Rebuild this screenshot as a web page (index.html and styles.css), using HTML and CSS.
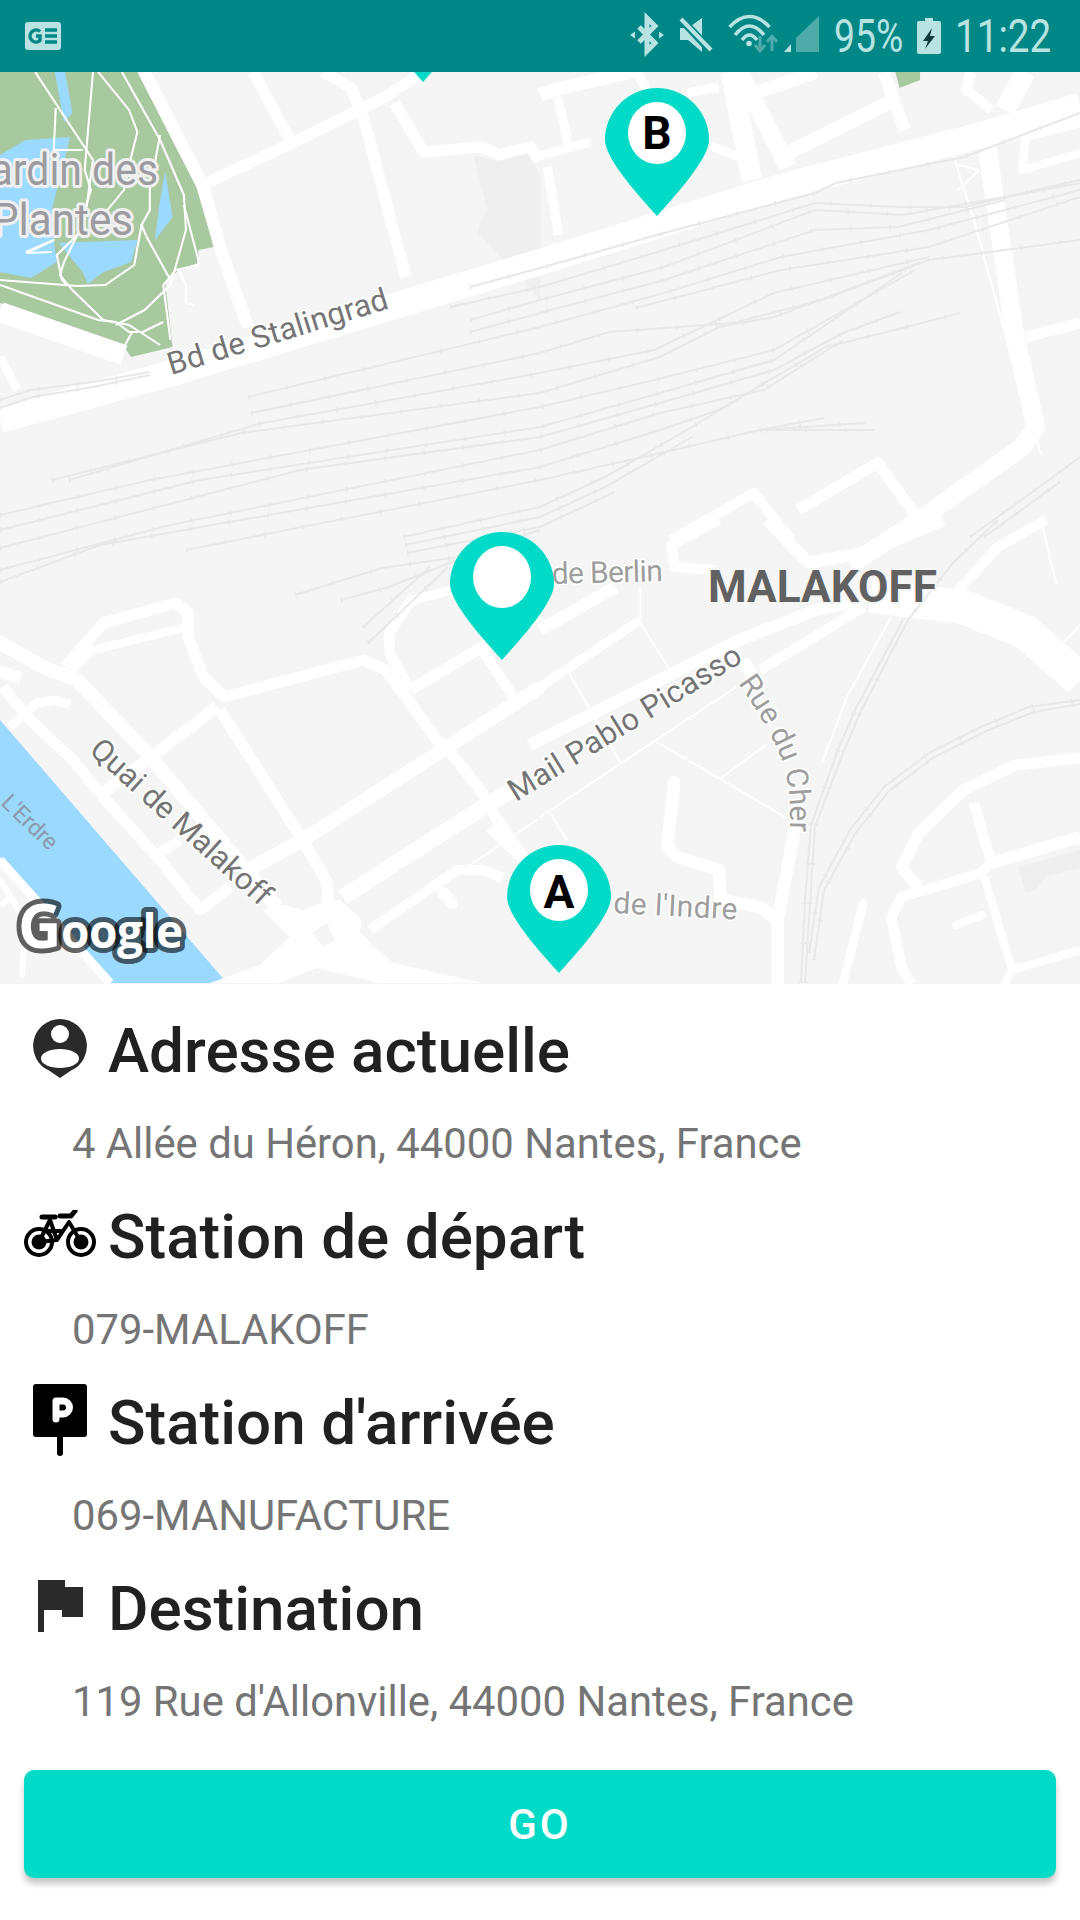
FILE: index.html
```html
<!DOCTYPE html>
<html lang="fr">
<head>
<meta charset="utf-8">
<title>Itinéraire</title>
<link rel="stylesheet" href="styles.css">
</head>
<body>
<div class="screen">
  <header class="status">
    <svg class="status-app" viewBox="0 0 36 28" width="36" height="28">
      <rect width="36" height="28" rx="3" fill="#b8e3e2"/>
      <path d="M15 9.500A6 6 0 1 0 15 18.500V14H11" class="st-g"/>
      <path d="M20 8H32M20 14H32M20 20H32" class="st-g"/>
    </svg>
    <div class="status-right">
      <svg class="status-icons" viewBox="630 0 190 72" width="190" height="72">
        <path class="st-line bold" d="M639 27L655 43L647 51V18L655 26L639 42"/>
        <path class="st-fill" d="M630 35l5-3.500v7zM664 35l-5-3.500v7z"/>
        <path class="st-fill" d="M680 28h8l14-10v34l-14-12h-8z"/>
        <path class="st-cut" d="M679 17L711 51"/>
        <path class="st-line" d="M681 19L711 50"/>
        <circle class="st-fill" cx="749" cy="43.500" r="2.800"/>
        <path class="st-line thin" d="M729.500 27Q749.500 6 769.500 27M735 35Q749.500 17 764 35M742 40Q749.500 30 757 40"/>
        <path class="st-dim-line" d="M760 36V50M755 45L760 51L765 45M772 51V37M767 42L772 36L777 42"/>
        <path class="st-fill" d="M784 52L791 44V52Z"/>
        <path class="st-dim" d="M796 52V38L819 16V52Z"/>
      </svg>
      <span class="st-text pct">95%</span>
      <svg class="status-batt" viewBox="0 0 24 36" width="24" height="36">
        <path class="st-fill" d="M8 0H16V3H22Q24 3 24 5V34Q24 36 22 36H2Q0 36 0 34V5Q0 3 2 3H8Z"/>
        <path class="st-bolt" d="M15 10L6 23H11L8 31L18 18H13Z"/>
      </svg>
      <span class="st-text time">11:22</span>
    </div>
  </header>

  <svg class="map" viewBox="0 72 1080 912" width="1080" height="912">
    <defs>
      <path id="pin" d="M0 0C-14 -16 -52 -56 -52 -76A52 52 0 1 1 52 -76C52 -56 14 -16 0 0Z"/>
      <g id="rails">
        <path d="M470 287L540 268L664 233L815 193L836 183L964 157L1080 113"/>
        <path d="M450 307L540 287L664 250L815 203L898 207L964 207L1080 180"/>
        <path d="M470 320L540 300L664 267L815 210L902 215L1005 197L1080 183"/>
        <path d="M470 332L540 313L664 280L815 230L898 227L1005 200"/>
        <path d="M248 397L540 327L664 293L781 257L929 230L1080 190"/>
        <path d="M636 308L781 270L929 247L1080 197"/>
        <path d="M251 413L540 353L609 332L733 323L822 300L929 260L1080 240"/>
        <path d="M69 480L262 423L540 373L654 350L774 293L929 257"/>
        <path d="M52 480L241 433L540 393L660 357L719 327L774 317L919 263"/>
        <path d="M0 515L150 480L540 407L654 380L774 350L915 270"/>
        <path d="M0 530L200 480L540 427L660 393L774 360L902 273"/>
        <path d="M0 548L300 470L540 437L660 403L774 370L843 333L900 312"/>
        <path d="M0 570L170 525L540 450L660 413L764 390L843 340"/>
        <path d="M0 582L100 545L540 467L660 430L719 410L826 347L895 330L960 313"/>
        <path d="M186 550L540 480L643 457L760 430L874 430"/>
        <path d="M403 537L540 507L605 477L692 427L774 377"/>
        <path d="M405 545L540 517L605 487L692 437"/>
        <path d="M407 553L540 527L615 492"/>
        <path d="M760 430L824 418M760 430L865 423"/>
        <path d="M295 595L382 568L458 557L540 530M341 600L389 587L482 550M363 627L430 567M368 643L448 567"/>
        <path d="M0 408L33 397L93 387L150 375M0 400L30 390L93 382L150 372"/>
        <path d="M970 537L1046 482L1080 457M984 537L1060 482"/>
        <path d="M805 983L809 920L815 827L843 753L860 713L908 620L953 563L998 520"/>
        <path d="M801 983L805 900L811 825L838 750L855 710L903 620"/>
        <path d="M809 953L819 887L850 830L884 787L929 753L981 727L1029 707L1080 700"/>
        <path d="M814 960L824 890L855 834L889 791L934 757L986 731L1034 712L1080 704"/>
      </g>
    </defs>

    <rect class="land" x="0" y="72" width="1080" height="912"/>

    <!-- park and water -->
    <g transform="scale(1.033 1)">
      <polygon class="park" points="0,303 120,347 127,357 167,347 160,283 173,270 192,263 192,250 207,247 190,187 133,72 0,72"/>
      <polygon class="water" points="53,72 63,72 70,113 62,122"/>
      <polygon class="water" points="0,155 25,140 68,137 60,170 50,210 52,240 55,262 30,278 0,272"/>
      <polygon class="water" points="57,243 133,240 127,262 100,272 85,284 80,272"/>
      <polygon class="water" points="160,172 167,217 150,240 155,200"/>
      <polyline class="road w2" points="34,72 90,160 82,220 62,262 58,275 70,290 100,320 125,325 155,345"/>
      <polyline class="road w2" points="90,72 82,170 88,190 75,235 55,255 60,280 65,285"/>
      <polyline class="road w2" points="95,72 125,110 133,132 125,165 120,190 100,215"/>
      <polyline class="road w2" points="118,72 155,140 178,195 180,230 165,285 140,310 112,325"/>
      <polyline class="road w2" points="54,108 52,150 80,150M42,122 53,128"/>
      <polyline class="road w2" points="155,135 145,190 145,210 137,225 142,237 165,280"/>
      <polyline class="road w2" points="178,205 192,260 192,265 170,270 158,285 165,340"/>
      <polyline class="road w2" points="0,280 75,286 102,285 130,265 137,225"/>
      <polyline class="road w2" points="0,285 95,320 112,322 125,332 138,332 158,322"/>
      <polyline class="road w2" points="128,332 120,347"/>
      <polyline class="road w2" points="173,270 180,285 180,303 188,305"/>
      <polyline class="road w2" points="25,252 52,240 26,253 50,252"/>
    </g>
    <polygon class="water" points="0,720 227,983 110,983 0,857"/>

    <!-- building footprints -->
    <g transform="scale(1.033 1)">
      <polygon class="building" points="458,155 480,160 510,152 523,175 523,300 480,252 462,232 468,216 472,210"/>
    </g>
    <g transform="translate(540 0) scale(1.033 1) translate(-540 0)">
      <polygon class="building" points="1003,867 1063,850 1063,868 1030,876 1020,890 1010,893"/>
      <polygon class="park" points="884,72 908,72 908,80 888,88"/>
    </g>

    <!-- roads, left half -->
    <g transform="scale(1.033 1)">
      <polyline class="road w26" points="0,420 170,372 523,262"/>
      <polyline class="road w20" points="0,312 120,355"/>
      <polyline class="road w8" points="0,357 17,390"/>
      <polyline class="road w12" points="140,72 197,187 213,247 240,327"/>
      <polyline class="road w11" points="200,183 283,143 373,97 410,72"/>
      <polyline class="road w11" points="245,72 282,142"/>
      <polyline class="road w11" points="313,72 340,88 353,122 393,277"/>
      <polyline class="road w11" points="382,103 410,152 467,147 483,155 513,147 523,160"/>
      <polyline class="road w12" points="-5,670 20,678"/>
      <polyline class="road w11" points="63,667 100,623 170,603 182,613 182,637 197,677 217,697 352,660 373,670 393,697 423,740 433,748 467,793 480,817 510,863"/>
      <polyline class="road w8" points="70,670 90,650 177,628"/>
      <polyline class="road w10" points="400,597 377,633 377,653 397,690"/>
      <polyline class="road w9" points="400,600 450,587"/>
      <polyline class="road w11" points="397,690 467,647 523,615"/>
      <polyline class="road w10" points="467,650 497,697"/>
      <polyline class="road w14" points="523,687 433,747 293,840 240,870"/>
      <polyline class="road w11" points="213,710 293,840 317,883 317,907"/>
    </g>

    <!-- roads, right half -->
    <g transform="translate(540 0) scale(1.033 1) translate(-540 0)">
      <polyline class="road w26" points="540,262 773,187 967,135 1063,106"/>
      <polyline class="road w13" points="540,95 560,88 630,72"/>
      <polyline class="road w9" points="547,167 558,235"/>
      <polyline class="road w9 cap" points="535,157 585,143"/>
      <polyline class="road w9" points="557,97 568,147"/>
      <polyline class="road w9" points="634,72 643,90"/>
      <polyline class="road w9" points="683,93 713,87"/>
      <polyline class="road w9" points="705,146 733,157"/>
      <polyline class="road w20" points="725,72 745,180"/>
      <polyline class="road w17" points="733,72 780,167"/>
      <polyline class="road w13" points="743,95 807,72"/>
      <polyline class="road w14" points="780,153 883,100"/>
      <polyline class="road w12" points="873,72 893,130"/>
      <polyline class="road w10" points="957,72 953,90 977,110"/>
      <polyline class="road w20" points="1010,72 990,110"/>
      <polyline class="road w18" points="973,143 977,177 1000,337 1020,427 1007,447 907,520 840,565"/>
      <polyline class="road w8" points="1063,123 1010,137 1007,170 1063,153"/>
      <polyline class="road w11" points="1010,337 1063,323"/>
      <polyline class="road w2" points="940,155 960,220 1000,370 1015,420 1025,455"/>
      <polyline class="road w2" points="945,165 965,170 945,190"/>
      <polyline class="road w10" points="667,540 747,493 773,527 783,540"/>
      <polyline class="road w11" points="790,510 867,463 907,520"/>
      <polyline class="road w12" points="760,520 800,563 857,552 930,520"/>
      <polyline class="road w10" points="713,520 667,545 670,567 710,570"/>
      <polyline class="road w12" points="540,630 613,587"/>
      <polyline class="road w9" points="540,687 637,620"/>
      <polyline class="road w2" points="637,620 637,587"/>
      <polyline class="road w34" points="860,596 950,607 1010,632 1063,680"/>
      <polyline class="road w10" points="1030,520 983,547 943,593"/>
      <polyline class="road w12" points="530,745 733,640 807,610 853,600"/>
      <polyline class="road w10" points="753,670 853,607"/>
      <polyline class="road w12" points="737,660 747,677"/>
      <polyline class="road w2" points="540,817 730,687"/>
      <polyline class="road w2" points="650,740 777,817"/>
      <polyline class="road w2" points="715,778 763,742"/>
      <polyline class="road w2" points="568,673 618,763"/>
      <polyline class="road w2" points="637,623 670,677"/>
      <polyline class="road w2" points="550,813 570,847"/>
      <polyline class="road w2" points="813,763 837,697 880,617"/>
      <polyline class="road w2" points="1025,520 1040,585"/>
      <polyline class="road w2" points="1040,650 1063,625"/>
      <polyline class="road w12 cap" points="670,782 663,847 673,857 713,870 715,900 753,907 770,920 770,984"/>
      <polyline class="road w12" points="787,827 770,920"/>
      <polyline class="road w11" points="1063,758 1000,765 950,790 907,833 890,867 903,883 907,893"/>
      <polyline class="road w10" points="960,803 977,863 967,873 890,897 880,917 890,967 900,984"/>
      <polyline class="road w12" points="977,863 1063,837"/>
      <polyline class="road w8" points="970,877 997,970 990,984"/>
      <polyline class="road w8" points="997,970 1063,950"/>
      <polyline class="road w8 cap" points="853,903 833,984"/>
      <polyline class="road w8 cap" points="943,925 968,915"/>
    </g>

    <!-- roads at true scale: the quai and the roundabout -->
    <polyline class="road w14" points="-5,640 43,667 77,680 147,753 277,907"/>
    <polyline class="road w11" points="3,687 30,720 73,760 103,797 160,860 200,910 230,887"/>
    <polyline class="road w9" points="10,727 37,703 55,700 70,705"/>
    <polyline class="road w12" points="103,793 143,763 217,707"/>
    <polyline class="road w10" points="160,853 180,840"/>
    <polyline class="road w6 cap" points="0,880 25,920 22,975"/>
    <polyline class="road w6" points="0,905 13,897"/>
    <polyline class="road w9" points="0,860 110,983"/>
    <polygon class="paved" points="263,910 283,905 303,910 320,903 340,900 362,920 360,932 372,945 393,963 483,983 210,983 260,965 290,937"/>
    <polyline class="road w16" points="343,897 463,820 520,785"/>
    <polyline class="road w10" points="370,930 457,870 483,870 503,878"/>
    <polyline class="road w12 cap" points="443,893 452,903"/>
    <polyline class="road w2" points="467,867 537,820"/>
    <polyline class="road w11" points="490,827 527,863"/>
    <polygon class="land" points="312,933 327,923 335,940 323,947"/>
    <polygon class="land" points="275,984 317,968 383,984"/>

    <g class="rail-lines"><use href="#rails"/></g>
    <g class="rail-ties"><use href="#rails"/></g>

    <!-- labels -->
    <text class="lbl-park" x="-32" y="185" textLength="190" lengthAdjust="spacingAndGlyphs">Jardin des</text>
    <text class="lbl-park" x="-8" y="235" textLength="141" lengthAdjust="spacingAndGlyphs">Plantes</text>
    <text class="lbl-road" transform="translate(171 375) rotate(-17)" textLength="229">Bd de Stalingrad</text>
    <text class="lbl-road" transform="translate(88 752) rotate(42)" textLength="232">Quai de Malakoff</text>
    <text class="lbl-water" transform="translate(0 804) rotate(44)" textLength="68">L'Erdre</text>
    <text class="lbl-road" transform="translate(516 802) rotate(-31.700)" textLength="268">Mail Pablo Picasso</text>
    <path id="cher" class="nopaint" d="M738 683C760 715 772 735 782 760C790 785 791 805 789 850"/>
    <text class="lbl-minor"><textPath href="#cher">Rue du Cher</textPath></text>
    <text class="lbl-minor" transform="translate(552 584) rotate(-1.500)" textLength="111">de Berlin</text>
    <text class="lbl-minor" transform="translate(613 913) rotate(3)" textLength="124">de l'Indre</text>
    <text class="lbl-city" x="708" y="602" textLength="229" lengthAdjust="spacingAndGlyphs">MALAKOFF</text>

    <!-- pins -->
    <use class="pin" href="#pin" x="423" y="82"/>
    <g transform="translate(657 216)">
      <use class="pin" href="#pin"/>
      <ellipse class="pin-hole" cx="0" cy="-83" rx="29" ry="31"/>
      <text class="pin-letter" x="0" y="-67">B</text>
    </g>
    <g transform="translate(502 660)">
      <use class="pin" href="#pin"/>
      <ellipse class="pin-hole" cx="0" cy="-83" rx="29" ry="31"/>
    </g>
    <g transform="translate(559 973)">
      <use class="pin" href="#pin"/>
      <ellipse class="pin-hole" cx="0" cy="-83" rx="29" ry="31"/>
      <text class="pin-letter" x="0" y="-65">A</text>
    </g>

    <text class="logo" x="18" y="948"><tspan class="logo-g">G</tspan>oogle</text>
  </svg>

  <main class="info">
    <section class="item">
      <h2 class="item-title">
        <span class="item-icon">
          <svg viewBox="0 0 54 59" width="54" height="59">
            <path class="ic-dark" d="M27 0A27 27 0 0 1 38 51.600L27 59L16 51.600A27 27 0 0 1 27 0Z"/>
            <circle class="ic-white" cx="27" cy="15" r="9"/>
            <ellipse class="ic-white" cx="27" cy="39.500" rx="19" ry="9.500"/>
          </svg>
        </span>
        Adresse actuelle
      </h2>
      <p class="item-sub">4 Allée du Héron, 44000 Nantes, France</p>
    </section>
    <section class="item">
      <h2 class="item-title">
        <span class="item-icon">
          <svg viewBox="0 0 72 48" width="72" height="48">
            <circle class="ic-ring" cx="15" cy="32" r="13"/>
            <circle class="ic-ring" cx="57" cy="32" r="13"/>
            <circle class="ic-black" cx="15" cy="32" r="7.500"/>
            <circle class="ic-black" cx="57" cy="32" r="7.500"/>
            <path class="ic-frame" d="M15 32L26 10L33 30L45 12L57 32M33 30L15 32M22 21H38"/>
            <path class="ic-cap" d="M18 7H31M36 6H47L51 1"/>
          </svg>
        </span>
        Station de départ
      </h2>
      <p class="item-sub">079-MALAKOFF</p>
    </section>
    <section class="item">
      <h2 class="item-title">
        <span class="item-icon">
          <svg viewBox="0 0 54 72" width="54" height="72">
            <rect class="ic-black" width="54" height="53" rx="3"/>
            <path class="ic-cap pole" d="M27 52V69"/>
            <path class="ic-p" d="M23 17V35M23 17H30A6.500 6.500 0 0 1 30 30H23"/>
          </svg>
        </span>
        Station d'arrivée
      </h2>
      <p class="item-sub">069-MANUFACTURE</p>
    </section>
    <section class="item">
      <h2 class="item-title">
        <span class="item-icon">
          <svg viewBox="0 0 45 52" width="45" height="52">
            <path class="ic-dark" d="M0 0H27V7H45V37H24V30H6V52H0Z"/>
          </svg>
        </span>
        Destination
      </h2>
      <p class="item-sub">119 Rue d'Allonville, 44000 Nantes, France</p>
    </section>
    <button class="go" type="button">GO</button>
  </main>
</div>
</body>
</html>
```
FILE: styles.css
```css
* { box-sizing: border-box; }
html, body { margin: 0; padding: 0; background: #fff; }
body { font-family: Roboto, "Liberation Sans", sans-serif; }
.screen { width: 1080px; height: 1920px; display: flex; flex-direction: column; overflow: hidden; }

/* status bar */
.status { height: 72px; flex: none; background: #008786; display: flex; align-items: center; justify-content: space-between; padding: 0 29px 0 25px; color: #b8e3e2; }
.status-app { display: block; }
.status-right { display: flex; align-items: center; }
.status-icons { display: block; }
.st-text { display: block; font-size: 46px; line-height: 72px; white-space: nowrap; transform-origin: left center; }
.pct { width: 69px; margin-left: 14px; transform: scaleX(.81); }
.time { width: 96px; margin-left: 14px; transform: scaleX(.84); }
.status-batt { display: block; margin-left: 14px; }
.st-g { fill: none; stroke: #008786; stroke-width: 3.5; }
.st-line { fill: none; stroke: #b8e3e2; stroke-width: 4; }
.st-line.bold { stroke-width: 5; }
.st-line.thin { stroke-width: 3.5; }
.st-cut { fill: none; stroke: #008786; stroke-width: 8; }
.st-fill { fill: #b8e3e2; }
.st-dim { fill: #4fabaa; }
.st-dim-line { fill: none; stroke: #4fabaa; stroke-width: 3; }
.st-bolt { fill: #123a3c; }

/* map */
.map { display: block; flex: none; }
.land { fill: #f5f5f5; }
.paved { fill: #fff; }
.park { fill: #a8c9a0; }
.water { fill: #9bd9fe; }
.building { fill: #efefef; }
.road { fill: none; stroke: #fff; stroke-linejoin: round; }
.road.cap { stroke-linecap: round; }
.w2 { stroke-width: 2; }
.w6 { stroke-width: 6; }
.w8 { stroke-width: 8; }
.w9 { stroke-width: 9; }
.w10 { stroke-width: 10; }
.w11 { stroke-width: 11; }
.w12 { stroke-width: 12; }
.w13 { stroke-width: 13; }
.w14 { stroke-width: 14; }
.w16 { stroke-width: 16; }
.w17 { stroke-width: 17; }
.w18 { stroke-width: 18; }
.w20 { stroke-width: 20; }
.w26 { stroke-width: 26; }
.w34 { stroke-width: 34; }
.rail-lines { fill: none; stroke: #e8e8e8; stroke-width: 2; }
.rail-ties { fill: none; stroke: #e8e8e8; stroke-width: 5; stroke-dasharray: 1.500 38; }
.nopaint { fill: none; stroke: none; }

.lbl-park, .lbl-road, .lbl-minor, .lbl-water, .lbl-city { paint-order: stroke; stroke-linejoin: round; font-family: Roboto, sans-serif; }
.lbl-park { font-size: 44px; fill: #9c9ca0; stroke: #f0f0f0; stroke-width: 6px; }
.lbl-road { font-size: 31px; fill: #757575; stroke: #fff; stroke-width: 3px; }
.lbl-minor { font-size: 30px; fill: #9e9e9e; stroke: #fff; stroke-width: 3px; }
.lbl-water { font-size: 23px; fill: #8a9ba8; }
.lbl-city { font-size: 44px; font-weight: 700; fill: #616161; stroke: #f5f5f5; stroke-width: 4px; }

.pin { fill: #02dac8; }
.pin-hole { fill: #fff; }
.pin-letter { font-family: Roboto, sans-serif; font-weight: 700; font-size: 46px; fill: #000; text-anchor: middle; }

.logo { font-family: "Open Sans", sans-serif; font-weight: 700; font-size: 46px; letter-spacing: -.5px; fill: #fff; stroke: rgba(0, 0, 0, .62); stroke-width: 10px; paint-order: stroke; stroke-linejoin: round; }
.logo-g { font-size: 60px; }

/* details */
.info { flex: 1; padding-top: 21px; display: flex; flex-direction: column; }
.item-title { margin: 0; height: 92px; display: flex; align-items: center; font-size: 62px; line-height: 92px; font-weight: 500; color: #212121; white-space: nowrap; }
.item-icon { width: 72px; margin: 0 12px 6px 24px; display: flex; justify-content: center; flex: none; }
.item-icon svg { display: block; }
.item-sub { margin: 0; padding-left: 72px; height: 94px; font-size: 41.800px; line-height: 94px; color: #757575; white-space: nowrap; }
.ic-dark { fill: #2a2a2a; }
.ic-white { fill: #fff; }
.ic-black { fill: #000; }
.ic-ring { fill: #fff; stroke: #000; stroke-width: 4; }
.ic-frame { fill: none; stroke: #000; stroke-width: 4; stroke-linejoin: round; }
.ic-cap { fill: none; stroke: #000; stroke-width: 5; stroke-linecap: round; stroke-linejoin: round; }
.ic-cap.pole { stroke-width: 6; }
.ic-p { fill: none; stroke: #fff; stroke-width: 7; stroke-linecap: round; }

.go { display: block; margin: 21px 24px 0; height: 108px; flex: none; border: 0; border-radius: 10px; background: #02dac8; color: #fff; font-family: Roboto, sans-serif; font-size: 42px; font-weight: 500; letter-spacing: 3px; box-shadow: 0 6px 6px rgba(0, 0, 0, .22); }
```
